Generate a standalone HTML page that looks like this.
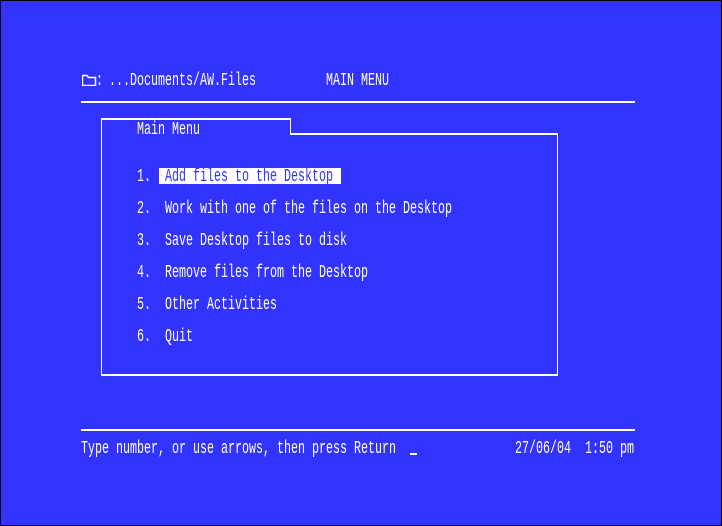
<!DOCTYPE html>
<html><head><style>
html,body{margin:0;padding:0}
body{width:722px;height:526px;background:#3333ff;position:relative;overflow:hidden;box-sizing:border-box;border:1px solid #000}
.t{position:absolute;font-family:"Liberation Mono",monospace;font-size:18px;line-height:18px;color:#fff;white-space:pre;transform:scaleX(0.648);transform-origin:0 0}
.l{position:absolute;background:#fff}
</style></head><body>
<svg style="position:absolute;left:81px;top:73px" width="15" height="12" viewBox="0 0 15 12">
<path d="M0.5 1.5 V11.5 H13.5 V3.5 H6.5 L5 1.5 Z" fill="none" stroke="#fff" stroke-width="1.5"/>
</svg>
<div class="t" style="left:95px;top:71px">:</div>
<div class="t" style="left:108px;top:71px">...Documents/AW.Files</div>
<div class="t" style="left:325px;top:71px">MAIN MENU</div>
<div class="l" style="left:80px;top:100px;width:554px;height:2px"></div>
<div class="l" style="left:100px;top:117px;width:190px;height:2px"></div>
<div class="l" style="left:100px;top:117px;width:1px;height:258px"></div>
<div class="l" style="left:289px;top:117px;width:1px;height:17px"></div>
<div class="l" style="left:289px;top:132px;width:268px;height:2px"></div>
<div class="l" style="left:556px;top:132px;width:1px;height:243px"></div>
<div class="l" style="left:100px;top:373px;width:457px;height:2px"></div>
<div class="t" style="left:136px;top:120px">Main Menu</div>
<div class="l" style="left:158px;top:167px;width:182px;height:16px"></div>
<div class="t" style="left:136px;top:167px">1.</div>
<div class="t" style="left:164px;top:167px;color:#3333ff">Add files to the Desktop</div>
<div class="t" style="left:136px;top:199px">2.  Work with one of the files on the Desktop</div>
<div class="t" style="left:136px;top:231px">3.  Save Desktop files to disk</div>
<div class="t" style="left:136px;top:263px">4.  Remove files from the Desktop</div>
<div class="t" style="left:136px;top:295px">5.  Other Activities</div>
<div class="t" style="left:136px;top:327px">6.  Quit</div>
<div class="l" style="left:80px;top:428px;width:554px;height:2px"></div>
<div class="t" style="left:80px;top:439px">Type number, or use arrows, then press Return</div>
<div class="l" style="left:409px;top:452px;width:7px;height:2px"></div>
<div class="t" style="left:514px;top:439px">27/06/04  1:50 pm</div>
</body></html>
